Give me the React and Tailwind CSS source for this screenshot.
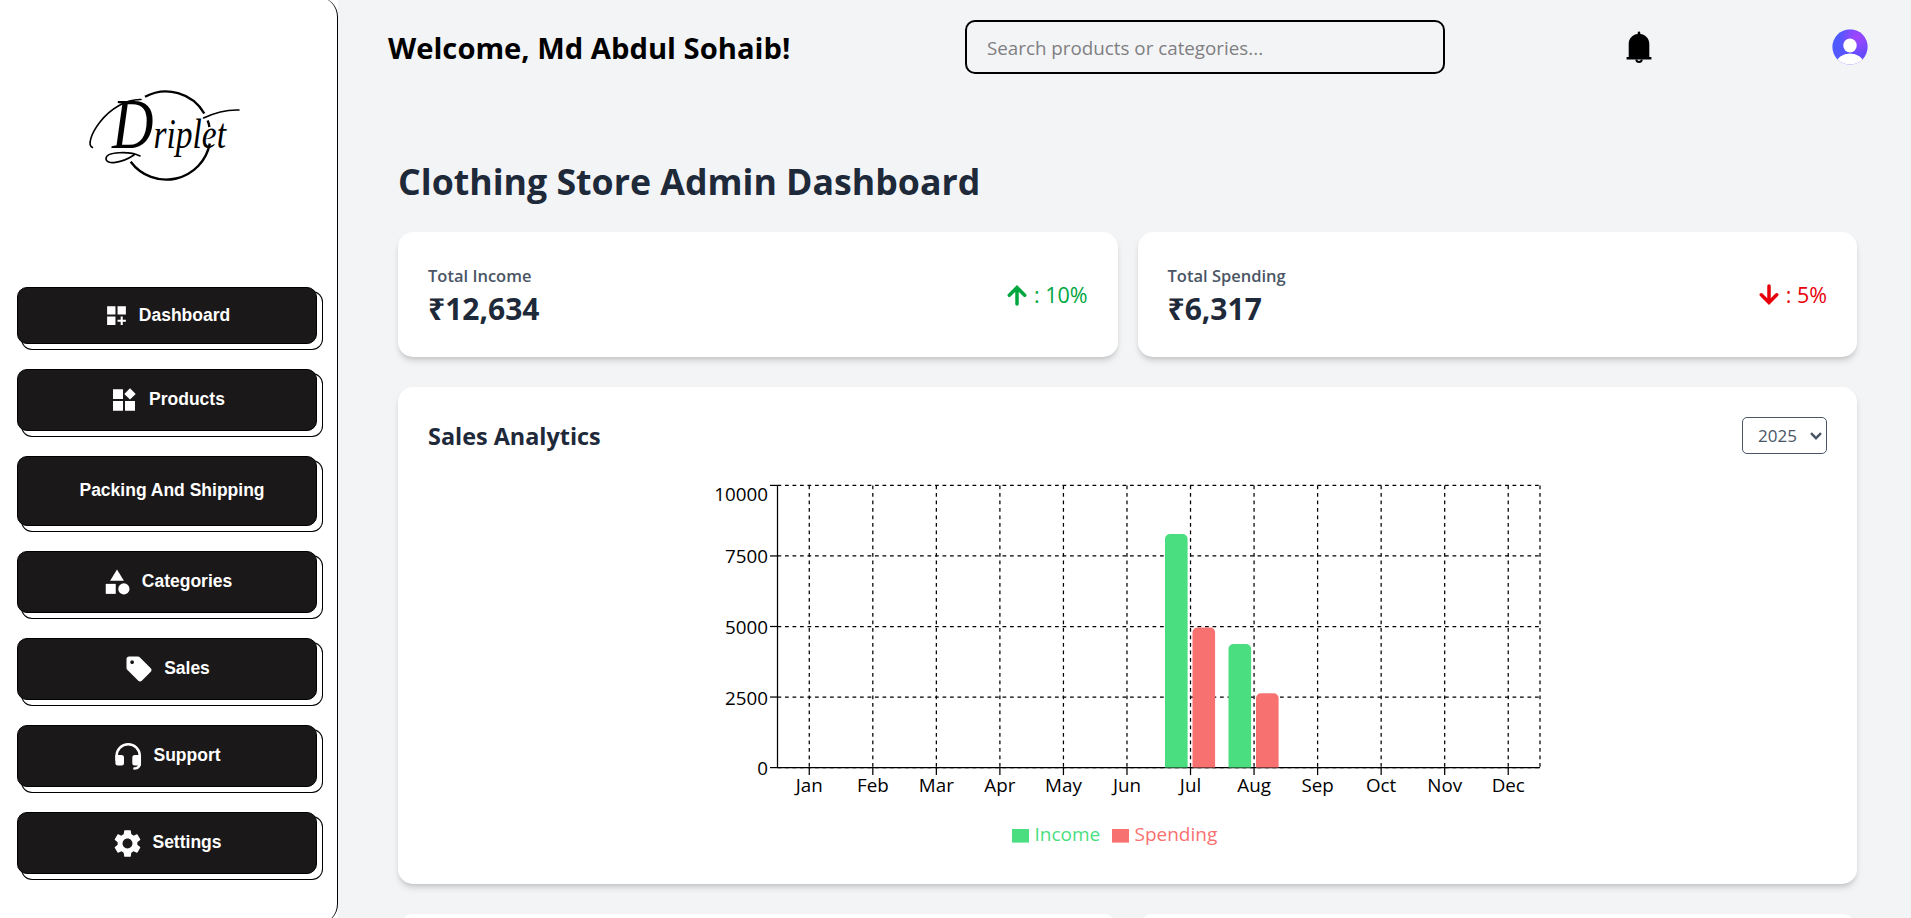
import React from "react";
import { MdDashboardCustomize, MdCategory, MdSell, MdSettings } from "react-icons/md";

const SANS = "font-['Open_Sans','Noto_Sans',sans-serif]";

function Logo() {
  return (
    <svg className="block h-[140px] w-[160px]" viewBox="85 65 160 140" fill="none" stroke="#000">
      <g strokeWidth="2.4">
        <path d="M145 96.8A44.3 44.3 0 0 1 204.3 113.5" />
        <path d="M207.6 120.5Q209 123.500 209.400 127" />
        <path d="M209.800 143.500A44.3 44.3 0 0 1 130.700 161.700" />
      </g>
      <g strokeWidth="1.6" strokeLinecap="round">
        <path d="M92.500 147.500C87 145 91.500 133 100 122C110 109 126 99 141 99.500" />
        <path d="M140 156C130 151 106 151.500 106 158.500C106 165.500 122 163 134 155" />
        <path d="M203.500 118C213 113.500 226 109.500 239 110" />
      </g>
      <text
        x="112"
        y="148"
        fill="#000"
        stroke="none"
        fontFamily="'Liberation Serif', serif"
        fontStyle="italic"
        fontSize="42"
        textLength="114"
        lengthAdjust="spacingAndGlyphs"
      >
        <tspan fontSize="72">D</tspan>
        riplet
      </text>
    </svg>
  );
}

function WidgetsIcon() {
  return (
    <svg className="size-[30px]" viewBox="0 0 30 30" fill="currentColor">
      <path d="M4 4.300h10V14H4zM4 16h10v9.800H4zM16 16h10v9.800H16zM21 3.200l5.700 5.700-5.700 5.700-5.700-5.700z" />
    </svg>
  );
}

function HeadsetIcon() {
  return (
    <svg className="size-[30px]" viewBox="0 0 30 30" fill="currentColor">
      <path
        d="M3.600 19v-4.200a11.600 11.600 0 0 1 23.200 0v7c0 3.600-2.200 5.600-5.400 5.700"
        fill="none"
        stroke="currentColor"
        strokeWidth="2.5"
        strokeLinecap="round"
      />
      <path d="M2.400 14H8.500a2.500 2.500 0 0 1 2.500 2.500v5.500a2.500 2.500 0 0 1-2.500 2.500H4.900a2.500 2.500 0 0 1-2.500-2.500zM28 14h-6.200a2.500 2.500 0 0 0-2.500 2.500V22a2.500 2.500 0 0 0 2.500 2.500H28z" />
    </svg>
  );
}

const NAV = [
  { label: "Dashboard", size: "h-[57px]", icon: <MdDashboardCustomize className="size-[25px]" /> },
  { label: "Products", size: "h-[62px]", icon: <WidgetsIcon /> },
  { label: "Packing And Shipping", size: "h-[70px]", icon: <span /> },
  { label: "Categories", size: "h-[62px]", icon: <MdCategory className="size-[30px]" /> },
  { label: "Sales", size: "h-[62px]", icon: <MdSell className="size-[30px]" /> },
  { label: "Support", size: "h-[62px]", icon: <HeadsetIcon /> },
  { label: "Settings", size: "h-[62px]", icon: <MdSettings className="-m-[1.5px] size-[33px]" /> },
];

function Sidebar() {
  return (
    <aside className="-mt-[3px] h-[927px] w-[338px] shrink-0 rounded-r-[20px] border-r border-black bg-white pt-[68px]">
      <div className="mb-[82px] pl-[85px]">
        <Logo />
      </div>
      <nav className="flex flex-col gap-[25px] pl-[17px]">
        {NAV.map((n) => (
          <button
            key={n.label}
            className={`${n.size} flex w-[300px] items-center justify-center gap-[10px] rounded-[10px] border border-black bg-[#1b1819] font-['Liberation_Sans',Arial,sans-serif] text-[17.5px] font-bold text-white shadow-[5px_5px_0_0_#fff,5px_5px_0_1px_#000]`}
          >
            {n.icon}
            <span className="mb-[2px] leading-5">{n.label}</span>
          </button>
        ))}
      </nav>
    </aside>
  );
}

function Bell() {
  return (
    <svg className="h-[33px] w-[26px]" viewBox="0 0 26 33">
      <path d="M11.700 3V1.800a1.300 1.300 0 0 1 2.600 0V3C19.500 3.500 23.300 7.500 23.300 13v13H25.400v2.600H.6V26H2.700V13C2.700 7.500 6.500 3.500 11.700 3z" />
      <path d="M10.200 28.500a2.900 3 0 0 0 5.700 0" fill="none" stroke="#000" strokeWidth="1.900" />
    </svg>
  );
}

function Avatar() {
  return (
    <svg className="size-9" viewBox="0 0 36 36">
      <defs>
        <radialGradient id="avatarGlow" cx="0.7" cy="0.22" r="0.5">
          <stop offset="0" stopColor="#a644ff" />
          <stop offset="1" stopColor="#a644ff" stopOpacity="0" />
        </radialGradient>
        <linearGradient id="avatarBase" x1="0" y1="0.3" x2="1" y2="0.7">
          <stop offset="0" stopColor="#4a5dff" />
          <stop offset="1" stopColor="#6c47ff" />
        </linearGradient>
        <clipPath id="avatarClip">
          <circle cx="18" cy="18" r="17.600" />
        </clipPath>
      </defs>
      <g clipPath="url(#avatarClip)">
        <rect width="36" height="36" fill="url(#avatarBase)" />
        <rect width="36" height="36" fill="url(#avatarGlow)" />
        <ellipse cx="18" cy="16.500" rx="6.700" ry="7" fill="#fff" />
        <ellipse cx="18" cy="34" rx="13.200" ry="9.500" fill="#fff" />
      </g>
    </svg>
  );
}

function Header() {
  return (
    <header className="flex h-[94px] shrink-0 items-center pl-[50px] pr-[43px]">
      <h2 className="w-[577px] pt-[3px] text-[29.2px] font-bold text-black">Welcome, Md Abdul Sohaib!</h2>
      <input
        className="h-[54px] w-[480px] rounded-[10px] border-2 border-black bg-transparent px-5 pt-[2px] text-[18.8px] text-black outline-none placeholder:text-[#7f7f82]"
        placeholder="Search products or categories..."
      />
      <div className="ml-[181px]">
        <Bell />
      </div>
      <div className="ml-auto">
        <Avatar />
      </div>
    </header>
  );
}

const CARD = "rounded-[15px] bg-white shadow-[0_5px_7.5px_-1px_rgb(0_0_0/0.12),0_2.5px_5px_-2px_rgb(0_0_0/0.12)]";

function Arrow({ down }) {
  return (
    <svg
      className={`h-[22px] w-[20px] ${down ? "rotate-180" : ""}`}
      viewBox="0 0 20 22"
      fill="none"
      stroke="currentColor"
      strokeWidth="3.500"
      strokeLinecap="round"
      strokeLinejoin="miter"
    >
      <path d="M10 20V3.500M2.300 11.200L10 3.400l7.700 7.800" />
    </svg>
  );
}

function StatCard({ title, value, change, down }) {
  return (
    <div className={`${CARD} flex h-[125px] items-center justify-between px-[30px]`}>
      <div className="pb-[2px]">
        <p className="text-[16.500px] font-semibold leading-[30px] text-[#4a5565]">{title}</p>
        <p className="text-[30px] font-bold leading-[36px] text-[#1e2939]">{value}</p>
      </div>
      <div className={`flex items-center gap-[7px] text-[21.5px] ${down ? "text-[#e7000b]" : "text-[#00a63e]"}`}>
        <Arrow down={down} />
        <span className="leading-6">: {change}</span>
      </div>
    </div>
  );
}

const MONTHS = ["Jan", "Feb", "Mar", "Apr", "May", "Jun", "Jul", "Aug", "Sep", "Oct", "Nov", "Dec"];
const X0 = 77.5;
const X1 = 840;
const Y0 = 15.4;
const Y1 = 297.6;
const BAND = (X1 - X0) / 12;
const STEP = (Y1 - Y0) / 4;
const TICKS = [
  { v: "10000", base: 31 },
  { v: "7500", base: 93.4 },
  { v: "5000", base: 164 },
  { v: "2500", base: 234.500 },
  { v: "0", base: 305 },
];
const BARS = [
  { x: 465, top: 64, fill: "#4ade80" },
  { x: 492.5, top: 157.6, fill: "#f87171" },
  { x: 528.5, top: 174, fill: "#4ade80" },
  { x: 556, top: 223.3, fill: "#f87171" },
];

function Chart() {
  return (
    <svg className="mx-auto block h-[396px] w-[855px]" viewBox="0 0 855 396" fontSize="18.8">
      <g stroke="#000" strokeWidth="1.25" strokeDasharray="3.75 3.75">
        {TICKS.map((t, i) => (
          <line key={t.v} x1={X0} x2={X1} y1={Y0 + i * STEP} y2={Y0 + i * STEP} />
        ))}
        {MONTHS.map((m, i) => (
          <line key={m} x1={X0 + (i + 0.5) * BAND} x2={X0 + (i + 0.5) * BAND} y1={Y0} y2={Y1} />
        ))}
        <line x1={X1} x2={X1} y1={Y0} y2={Y1} />
      </g>
      <g stroke="#000" strokeWidth="1.25">
        <line x1={X0} x2={X0} y1={Y0} y2={Y1} />
        <line x1={X0} x2={X1} y1={Y1} y2={Y1} />
        {TICKS.map((t, i) => (
          <line key={t.v} x1={X0 - 7.5} x2={X0} y1={Y0 + i * STEP} y2={Y0 + i * STEP} />
        ))}
        {MONTHS.map((m, i) => (
          <line key={m} x1={X0 + (i + 0.5) * BAND} x2={X0 + (i + 0.5) * BAND} y1={Y1} y2={Y1 + 7.5} />
        ))}
      </g>
      {BARS.map((b) => (
        <path
          key={b.x}
          fill={b.fill}
          d={`M${b.x} ${Y1}V${b.top + 5}a5 5 0 0 1 5-5h12.600a5 5 0 0 1 5 5V${Y1}z`}
        />
      ))}
      <g fill="#000">
        {TICKS.map((t) => (
          <text key={t.v} x="68" y={t.base} textAnchor="end">
            {t.v}
          </text>
        ))}
        {MONTHS.map((m, i) => (
          <text key={m} x={X0 + (i + 0.5) * BAND} y="322" textAnchor="middle">
            {m}
          </text>
        ))}
      </g>
      <g fontSize="19">
        <rect x="312" y="359" width="17" height="13.600" fill="#4ade80" />
        <text x="334.500" y="371" fill="#4ade80">Income</text>
        <rect x="412" y="359" width="17" height="13.600" fill="#f87171" />
        <text x="434.500" y="371" fill="#f87171">Spending</text>
      </g>
    </svg>
  );
}

function YearSelect() {
  return (
    <button className="flex h-[37px] w-[85px] items-center justify-between rounded-[5px] border border-[#4a5565] pl-[15px] pr-[4px] text-[17px] text-[#4a5565]">
      <span>2025</span>
      <svg className="h-[8px] w-[12px]" viewBox="0 0 12 8" fill="none" stroke="currentColor" strokeWidth="2.400">
        <path d="M1 1.200L6 6.200L11 1.200" />
      </svg>
    </button>
  );
}

export default function App() {
  return (
    <div className={`flex h-screen overflow-hidden bg-white ${SANS}`}>
      <Sidebar />
      <main className="flex min-w-0 flex-1 flex-col overflow-hidden bg-[#f3f4f6]">
        <Header />
        <div className="flex flex-col pl-[60px] pr-[54px] pt-[65px]">
          <h1 className="mb-[28px] text-[35.7px] font-bold leading-[45px] text-[#1e2939]">
            Clothing Store Admin Dashboard
          </h1>
          <section className="grid grid-cols-2 gap-5">
            <StatCard title="Total Income" value="₹12,634" change="10%" />
            <StatCard title="Total Spending" value="₹6,317" change="5%" down />
          </section>
          <section className={`${CARD} mt-[30px] h-[497px] shrink-0 pt-[30px]`}>
            <div className="flex h-[37px] items-center justify-between px-[30px]">
              <h2 className="pt-[3px] text-[23.4px] font-bold text-[#1e2939]">Sales Analytics</h2>
              <YearSelect />
            </div>
            <div className="mt-[16px]">
              <Chart />
            </div>
          </section>
          <section className="mt-[30px] grid grid-cols-2 gap-5">
            <div className={`${CARD} h-[125px]`} />
            <div className={`${CARD} h-[125px]`} />
          </section>
        </div>
      </main>
    </div>
  );
}
